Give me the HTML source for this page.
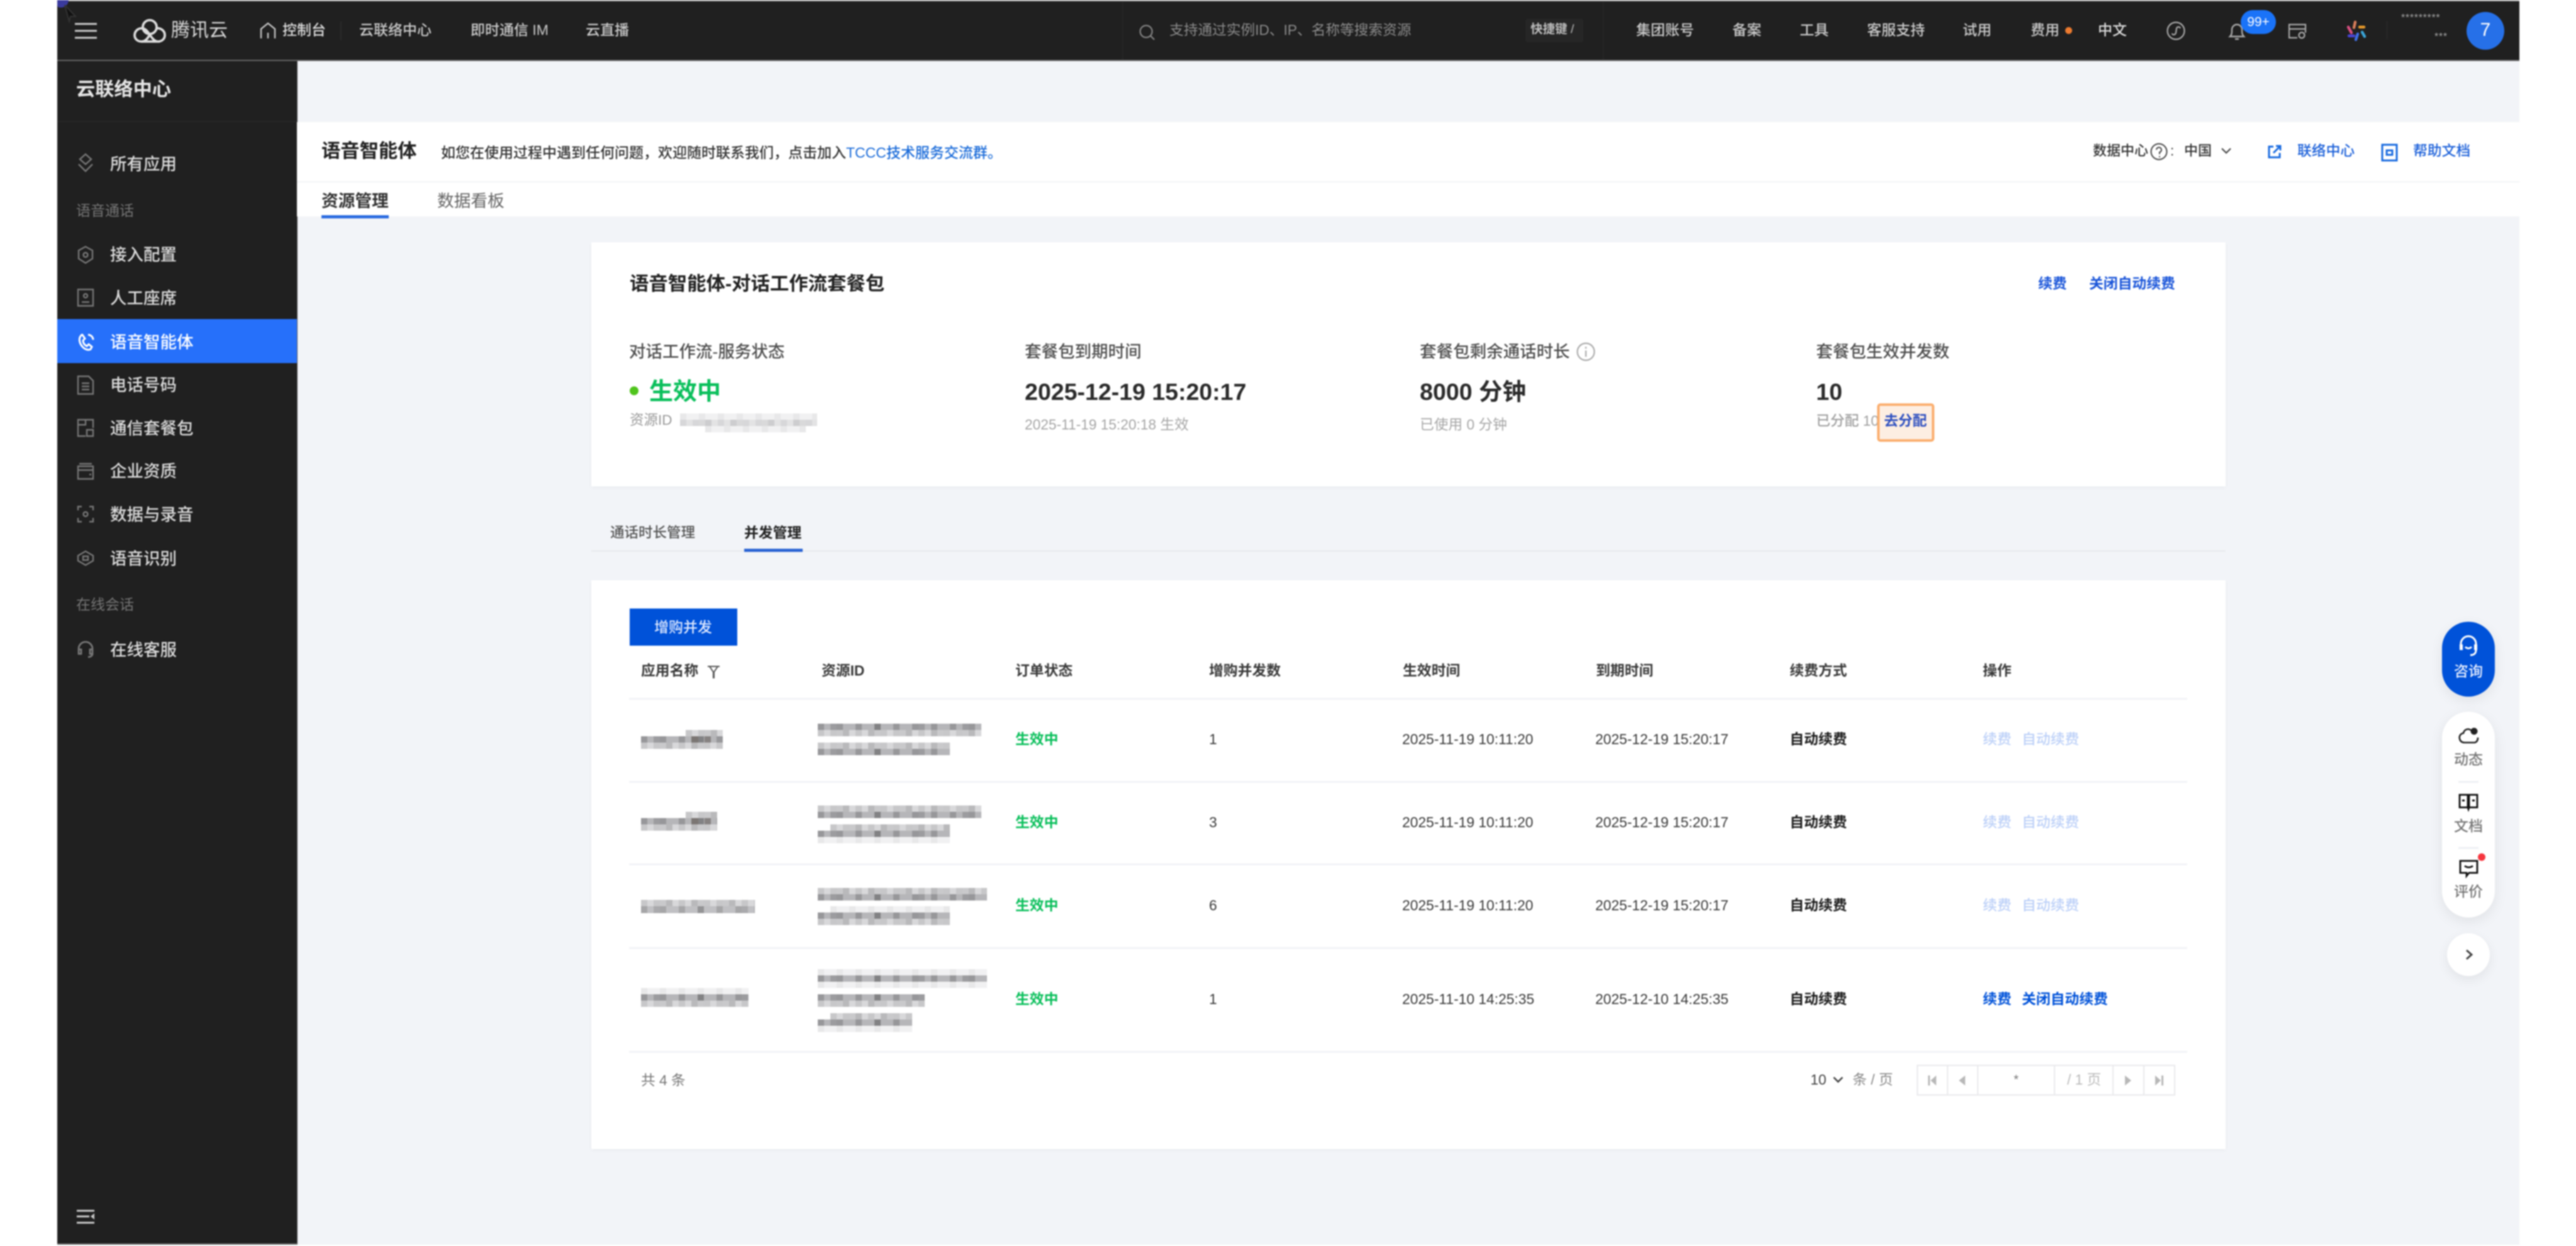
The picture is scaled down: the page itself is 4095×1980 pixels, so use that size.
<!DOCTYPE html>
<html lang="zh-CN"><head><meta charset="utf-8"><title>语音智能体</title>
<style>
html,body{margin:0;padding:0;width:4095px;height:1980px;background:#fff;overflow:hidden}
#r{position:absolute;left:0;top:0;width:4095px;height:1980px;overflow:hidden;filter:blur(1.15px);font-family:"Liberation Sans","Noto Sans CJK SC",sans-serif;color:#222}
.b{position:absolute}
.t{position:absolute;white-space:nowrap;line-height:1;transform:translateY(-50%);font-size:23px}
.w{font-weight:700}.n{font-weight:500}
svg{position:absolute;overflow:visible}
.h{color:#cacaca;font-weight:500}
.s{color:#dcdcdc;font-size:26.5px;font-weight:500;left:175px}
.g{color:#757575;font-size:23px;left:121px}
.lb{color:#4e4e4e;font-size:26.5px;font-weight:500}
.th{color:#3a3a3a;font-weight:700;font-size:22.8px;top:1066px}
.go{color:#0abf5b;font-weight:700;font-size:22.8px;left:1614px}
.dt{color:#3a3a3a;font-size:22.8px}
.au{color:#1c1c1c;font-weight:700;font-size:22.8px;left:2845px}
.op{color:#bcd0f8;font-size:22.8px;font-weight:500}
.a{color:#0052d9;font-weight:700;font-size:22.8px}
.m{position:absolute;height:10px}
.d{background:repeating-linear-gradient(90deg,#0000002b 0 10px,#0000 10px 30px),repeating-linear-gradient(90deg,#0000 0 20px,#00000024 20px 30px,#0000 30px 70px),#b6b6b9}
.l{background:repeating-linear-gradient(90deg,#00000014 0 10px,#0000 10px 20px),repeating-linear-gradient(90deg,#0000 0 30px,#00000012 30px 50px),#d8d8da}
.v{background:repeating-linear-gradient(90deg,#0000000a 0 10px,#0000 10px 30px),#f1f1f2}
.x{background:#7b7673}
.ln{position:absolute;left:1000px;width:2477px;height:3px;background:#f2f3f7}
.sd{position:absolute;top:1693px;width:2px;height:47px;background:#e9e9ec}
.fl{color:#777;font-size:23px;left:3924px;transform:translate(-50%,-50%);font-weight:500}
</style></head><body><div id="r">
<!-- page backdrop -->
<div class="b" style="left:91px;top:0;width:3914px;height:1978px;background:#f2f4f8"></div>
<!-- header -->
<div class="b" style="left:91px;top:0;width:3914px;height:97px;background:#202020;border-top:2px solid #b5b5b5;border-bottom:2px solid #666;box-sizing:border-box"></div>
<div class="b" style="left:91px;top:0;width:18px;height:12px;border-radius:0 0 12px 4px;background:#3a3a9e"></div>
<svg style="left:100px;top:6px" width="26" height="30"><path d="M3 2 L20 20 L12 20 L10 28 Z" fill="#111" stroke="#333" stroke-width="2"/></svg>
<svg style="left:119px;top:36px" width="36" height="26"><path d="M0 2H35M0 13H35M0 24H35" stroke="#c8c8c8" stroke-width="3"/></svg>
<svg style="left:212px;top:30px" width="52" height="38" viewBox="0 0 52 38" fill="none" stroke="#dcdcdc" stroke-width="3.8"><circle cx="26" cy="13" r="11"/><path d="M36 15c8-1 14 4 14 11 0 6-5 10-11 10H13C7 36 2 32 2 26s5-11 11-11c6 0 9 4 13 10s8 11 13 11"/><path d="M13 36c5 0 9-3 13-11"/></svg>
<div class="t" style="left:272px;top:49px;font-size:30px;color:#d8d8d8">腾讯云</div>
<svg style="left:412px;top:35px" width="28" height="26" fill="none" stroke="#c4c4c4" stroke-width="2.4"><path d="M3 26V11L14 2l11 9v15M14 26v-9"/></svg>
<div class="t n" style="left:449px;top:48px;color:#ddd">控制台</div>
<div class="t h" style="left:571px;top:48px">云联络中心</div>
<div class="t h" style="left:748px;top:48px">即时通信 IM</div>
<div class="t h" style="left:931px;top:48px">云直播</div>
<div class="b" style="left:541px;top:34px;width:2px;height:30px;background:#2b2b2b"></div>
<div class="b" style="left:1784px;top:3px;width:1px;height:92px;background:#2c2c2c"></div>
<div class="b" style="left:2548px;top:3px;width:1px;height:92px;background:#2c2c2c"></div>
<svg style="left:1810px;top:40px" width="28" height="24" fill="none" stroke="#858585" stroke-width="2.2"><circle cx="12" cy="10" r="9.5"/><path d="M19 17l6 6"/></svg>
<div class="t" style="left:1859px;top:48px;color:#8a8a8a;font-size:22.7px">支持通过实例ID、IP、名称等搜索资源</div>
<div class="b" style="left:2425px;top:30px;width:92px;height:37px;background:#262626;border-radius:3px"></div>
<div class="t w" style="left:2433px;top:47px;color:#bdbdbd;font-size:19.5px">快捷键 <span style="font-weight:400">/</span></div>
<div class="t h" style="left:2601px;top:48px">集团账号</div>
<div class="t h" style="left:2754px;top:48px">备案</div>
<div class="t h" style="left:2861px;top:48px">工具</div>
<div class="t h" style="left:2968px;top:48px">客服支持</div>
<div class="t h" style="left:3120px;top:48px">试用</div>
<div class="t h" style="left:3228px;top:48px">费用</div>
<div class="b" style="left:3283px;top:43px;width:11px;height:11px;border-radius:50%;background:#ed7b2f"></div>
<div class="t h" style="left:3335px;top:48px;color:#ddd">中文</div>
<svg style="left:3444px;top:34px" width="30" height="30" fill="none" stroke="#aaa" stroke-width="2.2"><circle cx="15" cy="15" r="13.5"/><path d="M9 19c0 3 5 3 6-1l1-7c1-3 5-3 6 0"/></svg>
<svg style="left:3543px;top:33px" width="26" height="32" fill="none" stroke="#aaa" stroke-width="2.4"><path d="M2 25c3-3 3-6 3-11a8 8 0 0 1 16 0c0 5 0 8 3 11zM10 29h6"/></svg>
<svg style="left:3637px;top:37px" width="30" height="26" fill="none" stroke="#aaa" stroke-width="2.2"><path d="M15 23H2V2h26v13M2 9h26"/><circle cx="22" cy="19" r="4.5"/></svg>
<svg style="left:3731px;top:32px" width="31" height="34" fill="none" stroke-width="4.4" stroke-linecap="round"><path d="M13 3l-2 9" stroke="#d87e5a"/><path d="M20 11h7" stroke="#e89a2a"/><path d="M24 19l4 7" stroke="#3aa5d8"/><path d="M17 22l-3 9" stroke="#3e6fe8"/><path d="M3 25h8" stroke="#4a45d8"/><path d="M2 11l5 9" stroke="#d84f80"/></svg>
<div class="b" style="left:3794px;top:33px;width:1px;height:30px;background:#2e2e2e"></div>
<div class="t" style="left:3817px;top:29px;color:#aaa;font-size:16px;letter-spacing:.7px">*********</div>
<div class="t" style="left:3870px;top:59px;color:#aaa;font-size:16px;letter-spacing:.7px">***</div>
<div class="b" style="left:3921px;top:19px;width:60px;height:60px;border-radius:50%;background:#2670e8"></div>
<div class="t" style="left:3951px;top:48px;color:#fff;font-size:30px;transform:translate(-50%,-50%)">7</div>
<div class="b" style="left:3562px;top:16px;width:56px;height:38px;border-radius:19px;background:#1a73f8"></div>
<div class="t n" style="left:3590px;top:35px;color:#fff;font-size:21px;transform:translate(-50%,-50%)">99+</div>
<!-- sidebar -->
<div class="b" style="left:91px;top:97px;width:381px;height:1881px;background:#202020;border-right:1px solid #555;box-sizing:content-box"></div>
<div class="b" style="left:91px;top:1976px;width:382px;height:2px;background:#777"></div>
<div class="t w" style="left:121px;top:143px;font-size:30.2px;color:#e6e6e6">云联络中心</div>
<div class="b" style="left:91px;top:192px;width:381px;height:2px;background:#282828"></div>
<svg style="left:122px;top:243px" width="28" height="32" fill="none" stroke="#777" stroke-width="2.4"><path d="M14 2l9 8-9 8-9-8zM3 18l11 11 11-11"/></svg>
<div class="t s" style="top:261px">所有应用</div>
<div class="t g" style="top:335px">语音通话</div>
<svg style="left:122px;top:390px" width="28" height="30" fill="none" stroke="#777" stroke-width="2.4"><path d="M14 2l11 6v13l-11 7-11-7V8z"/><circle cx="14" cy="15" r="3.5"/></svg>
<div class="t s" style="top:405px">接入配置</div>
<svg style="left:122px;top:458px" width="28" height="30" fill="none" stroke="#777" stroke-width="2.4"><path d="M2 2h24v26H2z"/><circle cx="14" cy="12" r="3"/><path d="M8 22h12"/></svg>
<div class="t s" style="top:474px">人工座席</div>
<div class="b" style="left:91px;top:507px;width:381px;height:70px;background:#2670fa"></div>
<svg style="left:122px;top:529px" width="28" height="30" fill="none" stroke="#fff" stroke-width="3"><path d="M8 3C2 8 4 17 10 23c3 3 8 5 12 3l2-4-5-4-3 3c-4-2-6-5-6-9l3-3-4-6zM18 3a8 8 0 0 1 8 8"/></svg>
<div class="t" style="left:175px;top:544px;color:#fff;font-size:26.5px;font-weight:500">语音智能体</div>
<svg style="left:122px;top:596px" width="28" height="32" fill="none" stroke="#777" stroke-width="2.4"><path d="M2 2h17l7 7v21H2zM8 13h12M8 18h12M8 23h12"/></svg>
<div class="t s" style="top:612px">电话号码</div>
<svg style="left:122px;top:665px" width="28" height="32" fill="none" stroke="#777" stroke-width="2.4"><path d="M14 28H2V2h24v13M2 10h12v-8"/><path d="M16 18h10v10H16z"/></svg>
<div class="t s" style="top:681px">通信套餐包</div>
<svg style="left:122px;top:735px" width="28" height="28" fill="none" stroke="#777" stroke-width="2.4"><path d="M2 6h24v20H2zM2 12h24M4 2h20M20 19h3"/></svg>
<div class="t s" style="top:749px">企业资质</div>
<svg style="left:122px;top:803px" width="28" height="28" fill="none" stroke="#777" stroke-width="2.4"><path d="M2 8V2h6M20 2h6v6M26 20v6h-6M8 26H2v-6"/><circle cx="14" cy="14" r="3.5"/></svg>
<div class="t s" style="top:818px">数据与录音</div>
<svg style="left:122px;top:873px" width="28" height="28" fill="none" stroke="#777" stroke-width="2.4"><path d="M2 10L14 3l12 7v8l-12 7-12-7z"/><path d="M10 11h8v6h-8z"/></svg>
<div class="t s" style="top:888px">语音识别</div>
<div class="t g" style="top:961px">在线会话</div>
<svg style="left:122px;top:1018px" width="28" height="28" fill="none" stroke="#777" stroke-width="2.8"><path d="M3 16v-3a11 11 0 0 1 22 0v3M3 14h4v7H3zM21 14h4v7h-4zM25 21c0 3-3 5-7 5"/></svg>
<div class="t s" style="top:1033px">在线客服</div>
<svg style="left:122px;top:1922px" width="28" height="24" fill="none" stroke="#c8c8c8" stroke-width="3"><path d="M0 2h28M0 11h20M0 21h28"/><path d="M28 6l-6 5 6 5z" fill="#c8c8c8" stroke="none"/></svg>
<!-- page head -->
<div class="b" style="left:472px;top:194px;width:3533px;height:150px;background:#fff"></div>
<div class="b" style="left:472px;top:288px;width:3533px;height:2px;background:#f3f4f7"></div>
<div class="t w" style="left:511px;top:241px;font-size:30.3px;color:#222">语音智能体</div>
<div class="t n" style="left:701px;top:243px;color:#333">如您在使用过程中遇到任何问题，欢迎随时联系我们，点击加入<span style="color:#1a6bd9">TCCC技术服务交流群。</span></div>
<div class="t w" style="left:511px;top:320px;font-size:26.7px;color:#333">资源管理</div>
<div class="b" style="left:511px;top:342px;width:107px;height:5px;background:#2a6be0"></div>
<div class="t" style="left:695px;top:320px;font-size:26.7px;color:#666">数据看板</div>
<div class="t n" style="left:3327px;top:240px;font-size:22px;color:#333">数据中心</div>
<svg style="left:3418px;top:227px" width="30" height="28" fill="none" stroke="#444" stroke-width="2"><circle cx="14" cy="14" r="12.5"/><path d="M10 11a4 4 0 1 1 5 4v3M15 21v2"/></svg>
<div class="t n" style="left:3450px;top:240px;font-size:22px;color:#333">:</div>
<div class="t n" style="left:3472px;top:240px;font-size:22px;color:#333">中国</div>
<svg style="left:3530px;top:234px" width="18" height="12" fill="none" stroke="#444" stroke-width="2.2"><path d="M2 2l7 7 7-7"/></svg>
<svg style="left:3605px;top:230px" width="21" height="22" fill="none" stroke="#1a6be0" stroke-width="3"><path d="M9 3H2v17h17v-7M9 13L19 3M13 2h7v7"/></svg>
<div class="t n" style="left:3652px;top:240px;font-size:22.8px;color:#1a5fd9">联络中心</div>
<svg style="left:3785px;top:228px" width="27" height="29" fill="none" stroke="#1a6be0" stroke-width="3"><path d="M2 2h23v25H2z"/><path d="M9 11h9v7H9z"/></svg>
<div class="t n" style="left:3836px;top:240px;font-size:22.8px;color:#1a5fd9">帮助文档</div>
<!-- card 1 -->
<div class="b" style="left:940px;top:385px;width:2598px;height:388px;background:#fff;box-shadow:0 2px 6px #0000000a"></div>
<div class="t w" style="left:1001px;top:451px;font-size:30.4px;color:#222">语音智能体-对话工作流套餐包</div>
<div class="t a" style="left:3240px;top:451px;color:#1a55d9">续费</div>
<div class="t a" style="left:3321px;top:451px;color:#1a55d9">关闭自动续费</div>
<div class="t lb" style="left:1000px;top:559px">对话工作流-服务状态</div>
<div class="t lb" style="left:1629px;top:559px">套餐包到期时间</div>
<div class="t lb" style="left:2257px;top:559px">套餐包剩余通话时长</div>
<svg style="left:2506px;top:544px" width="30" height="30" fill="none" stroke="#aaa" stroke-width="2.2"><circle cx="15" cy="15" r="13.5"/><path d="M15 13v10M15 7v3"/></svg>
<div class="t lb" style="left:2887px;top:559px">套餐包生效并发数</div>
<div class="b" style="left:1001px;top:614px;width:14px;height:14px;border-radius:50%;background:#4fc41c"></div>
<div class="t w" style="left:1032px;top:623px;font-size:38px;color:#0abf5b">生效中</div>
<div class="t w" style="left:1629px;top:623px;font-size:37.5px;color:#2b2b2b">2025-12-19 15:20:17</div>
<div class="t w" style="left:2257px;top:623px;font-size:37.5px;color:#2b2b2b">8000 分钟</div>
<div class="t w" style="left:2887px;top:623px;font-size:37.5px;color:#2b2b2b">10</div>
<div class="t" style="left:1001px;top:668px;font-size:22.5px;color:#999">资源ID</div>
<i class="m v" style="left:1081px;top:657px;width:218px"></i><i class="m l" style="left:1081px;top:667px;width:218px;opacity:.7"></i><i class="m v" style="left:1121px;top:677px;width:160px"></i>
<div class="t" style="left:1629px;top:675px;font-size:22.7px;color:#a6a6a6">2025-11-19 15:20:18 生效</div>
<div class="t" style="left:2257px;top:675px;font-size:22.7px;color:#a6a6a6">已使用 0 分钟</div>
<div class="t n" style="left:2887px;top:669px;font-size:22.7px;color:#a0a0a0">已分配 10</div>
<div class="b" style="left:2984px;top:641px;width:91px;height:61px;box-sizing:border-box;background:#fdeee2;border:4px solid #fbae6e;border-radius:5px"></div>
<div class="t w" style="left:2995px;top:669px;font-size:22.7px;color:#2f50c0">去分配</div>
<!-- tabs -->
<div class="t n" style="left:970px;top:847px;font-size:22.5px;color:#555">通话时长管理</div>
<div class="t w" style="left:1183px;top:847px;font-size:22.8px;color:#222">并发管理</div>
<div class="b" style="left:940px;top:874px;width:2598px;height:3px;background:#eaecef"></div>
<div class="b" style="left:1183px;top:872px;width:93px;height:5px;background:#2a63d4"></div>
<!-- card 2 -->
<div class="b" style="left:940px;top:922px;width:2598px;height:904px;background:#fff;box-shadow:0 2px 6px #0000000a"></div>
<div class="b" style="left:1001px;top:967px;width:171px;height:59px;background:#0052d9"></div>
<div class="t n" style="left:1040px;top:997px;color:#dfe9ff;font-size:23px">增购并发</div>
<div class="t th" style="left:1019px">应用名称</div>
<svg style="left:1124px;top:1057px" width="21" height="22" fill="none" stroke="#555" stroke-width="2"><path d="M1 2h19M4 2l6 9v10M17 2l-6 9v10"/></svg>
<div class="t th" style="left:1306px">资源ID</div>
<div class="t th" style="left:1614px">订单状态</div>
<div class="t th" style="left:1922px">增购并发数</div>
<div class="t th" style="left:2230px">生效时间</div>
<div class="t th" style="left:2537px">到期时间</div>
<div class="t th" style="left:2845px">续费方式</div>
<div class="t th" style="left:3152px">操作</div>
<div class="ln" style="top:1109px"></div><div class="ln" style="top:1241px"></div><div class="ln" style="top:1372px"></div><div class="ln" style="top:1505px"></div><div class="ln" style="top:1670px"></div>
<!-- mosaics row 1 -->
<i class="m l" style="left:1090px;top:1160px;width:59px"></i><i class="m d" style="left:1019px;top:1170px;width:130px"></i><i class="m l" style="left:1019px;top:1180px;width:130px"></i>
<i class="m x" style="left:1099px;top:1170px;width:11px"></i><i class="m x" style="left:1120px;top:1170px;width:10px;opacity:.8"></i>
<i class="m d" style="left:1300px;top:1150px;width:260px"></i><i class="m l" style="left:1300px;top:1160px;width:260px"></i>
<i class="m l" style="left:1300px;top:1180px;width:210px"></i><i class="m d" style="left:1300px;top:1190px;width:210px"></i>
<!-- row 2 -->
<i class="m l" style="left:1090px;top:1290px;width:50px"></i><i class="m d" style="left:1019px;top:1300px;width:121px"></i><i class="m l" style="left:1019px;top:1310px;width:121px"></i>
<i class="m x" style="left:1099px;top:1300px;width:11px"></i><i class="m x" style="left:1120px;top:1300px;width:10px;opacity:.8"></i>
<i class="m l" style="left:1300px;top:1280px;width:260px"></i><i class="m d" style="left:1300px;top:1290px;width:260px"></i>
<i class="m l" style="left:1320px;top:1310px;width:190px"></i><i class="m d" style="left:1300px;top:1320px;width:210px"></i><i class="m v" style="left:1300px;top:1330px;width:210px"></i>
<!-- row 3 -->
<i class="m l" style="left:1019px;top:1430px;width:181px"></i><i class="m d" style="left:1019px;top:1440px;width:181px;height:11px;opacity:.85"></i>
<i class="m l" style="left:1300px;top:1411px;width:269px"></i><i class="m d" style="left:1300px;top:1421px;width:269px"></i>
<i class="m v" style="left:1320px;top:1440px;width:190px"></i><i class="m d" style="left:1300px;top:1450px;width:210px"></i><i class="m l" style="left:1300px;top:1460px;width:210px"></i>
<!-- row 4 -->
<i class="m v" style="left:1019px;top:1570px;width:171px"></i><i class="m d" style="left:1019px;top:1580px;width:171px"></i><i class="m l" style="left:1019px;top:1590px;width:171px"></i>
<i class="m v" style="left:1300px;top:1540px;width:269px"></i><i class="m d" style="left:1300px;top:1550px;width:269px"></i><i class="m v" style="left:1300px;top:1560px;width:269px"></i>
<i class="m d" style="left:1300px;top:1580px;width:170px"></i><i class="m l" style="left:1300px;top:1590px;width:170px"></i>
<i class="m l" style="left:1320px;top:1610px;width:130px"></i><i class="m d" style="left:1300px;top:1620px;width:150px"></i><i class="m v" style="left:1300px;top:1630px;width:150px"></i>
<!-- table text -->
<div class="t go" style="top:1175px">生效中</div><div class="t dt" style="left:1922px;top:1175px">1</div><div class="t dt" style="left:2229px;top:1175px">2025-11-19 10:11:20</div><div class="t dt" style="left:2536px;top:1175px">2025-12-19 15:20:17</div><div class="t au" style="top:1175px">自动续费</div><div class="t op" style="left:3152px;top:1175px">续费</div><div class="t op" style="left:3214px;top:1175px">自动续费</div>
<div class="t go" style="top:1307px">生效中</div><div class="t dt" style="left:1922px;top:1307px">3</div><div class="t dt" style="left:2229px;top:1307px">2025-11-19 10:11:20</div><div class="t dt" style="left:2536px;top:1307px">2025-12-19 15:20:17</div><div class="t au" style="top:1307px">自动续费</div><div class="t op" style="left:3152px;top:1307px">续费</div><div class="t op" style="left:3214px;top:1307px">自动续费</div>
<div class="t go" style="top:1439px">生效中</div><div class="t dt" style="left:1922px;top:1439px">6</div><div class="t dt" style="left:2229px;top:1439px">2025-11-19 10:11:20</div><div class="t dt" style="left:2536px;top:1439px">2025-12-19 15:20:17</div><div class="t au" style="top:1439px">自动续费</div><div class="t op" style="left:3152px;top:1439px">续费</div><div class="t op" style="left:3214px;top:1439px">自动续费</div>
<div class="t go" style="top:1588px">生效中</div><div class="t dt" style="left:1922px;top:1588px">1</div><div class="t dt" style="left:2229px;top:1588px">2025-11-10 14:25:35</div><div class="t dt" style="left:2536px;top:1588px">2025-12-10 14:25:35</div><div class="t au" style="top:1588px">自动续费</div><div class="t a" style="left:3152px;top:1588px">续费</div><div class="t a" style="left:3214px;top:1588px">关闭自动续费</div>
<!-- pagination -->
<div class="t" style="left:1019px;top:1717px;color:#777;font-size:22.7px">共 4 条</div>
<div class="t" style="left:2878px;top:1716px;color:#444;font-size:22.7px">10</div>
<svg style="left:2913px;top:1710px" width="18" height="12" fill="none" stroke="#444" stroke-width="2.6"><path d="M2 2l7 7 7-7"/></svg>
<div class="t" style="left:2945px;top:1716px;color:#888;font-size:22.7px">条 / 页</div>
<div class="b" style="left:3047px;top:1692px;width:411px;height:49px;box-sizing:border-box;border:2px solid #e9e9ec"></div>
<div class="sd" style="left:3095px"></div><div class="sd" style="left:3143px"></div><div class="sd" style="left:3265px"></div><div class="sd" style="left:3358px"></div><div class="sd" style="left:3407px"></div>
<svg style="left:3064px;top:1706px" width="16" height="22" fill="#b8b8b8"><path d="M1 3h3v16H1zM14 3v16L5 11z"/></svg>
<svg style="left:3112px;top:1706px" width="14" height="22" fill="#b8b8b8"><path d="M12 3v16L2 11z"/></svg>
<div class="t" style="left:3205px;top:1716px;color:#777;font-size:20px;transform:translate(-50%,-50%)">*</div>
<div class="t" style="left:3286px;top:1716px;color:#bbb;font-size:22.7px">/ 1 页</div>
<svg style="left:3376px;top:1706px" width="14" height="22" fill="#b8b8b8"><path d="M2 3v16l10-8z"/></svg>
<svg style="left:3424px;top:1706px" width="16" height="22" fill="#b8b8b8"><path d="M2 3v16l9-8zM12 3h3v16h-3z"/></svg>
<!-- float tools -->
<div class="b" style="left:3882px;top:988px;width:84px;height:119px;border-radius:42px;background:#0052d9;box-shadow:0 6px 20px #00000014"></div>
<svg style="left:3908px;top:1009px" width="32" height="36" fill="none" stroke="#fff" stroke-width="3"><path d="M4 16V14a12 12 0 0 1 24 0v2"/><path d="M2 15h5v9H2zM25 15h5v9h-5z" fill="#fff" stroke="none"/><path d="M11 19c3 3 7 3 10 0M28 24c0 5-3 8-9 8" /></svg>
<div class="t fl" style="top:1067px;color:#e8efff">咨询</div>
<div class="b" style="left:3882px;top:1131px;width:84px;height:327px;border-radius:42px;background:#fff;box-shadow:0 6px 22px #00000014"></div>
<svg style="left:3908px;top:1155px" width="32" height="28" fill="none" stroke="#222" stroke-width="2.6"><path d="M22 8c-3-6-12-6-14 2-5 1-7 5-6 9 1 4 4 6 8 6h16c4-1 5-4 5-8"/><circle cx="25" cy="7" r="5.5" fill="#222" stroke="none"/></svg>
<div class="t fl" style="top:1207px">动态</div>
<div class="b" style="left:3908px;top:1241px;width:32px;height:3px;background:#eef0f4"></div>
<svg style="left:3908px;top:1261px" width="32" height="26" fill="none" stroke="#111" stroke-width="2.8"><path d="M2 2h13v20H2zM17 2h13v20H17zM15 22l1 3 1-3"/><path d="M6 11h4M22 11h4" stroke-width="3"/></svg>
<div class="t fl" style="top:1313px">文档</div>
<div class="b" style="left:3908px;top:1346px;width:32px;height:3px;background:#eef0f4"></div>
<svg style="left:3909px;top:1366px" width="30" height="28" fill="none" stroke="#111" stroke-width="2.8"><path d="M2 2h27v19H16l-4 5v-5H2z"/><path d="M9 10c4 3 9 3 13 0"/></svg>
<div class="b" style="left:3939px;top:1356px;width:12px;height:12px;border-radius:50%;background:#f6363f"></div>
<div class="t fl" style="top:1417px">评价</div>
<div class="b" style="left:3890px;top:1483px;width:68px;height:68px;border-radius:50%;background:#fff;box-shadow:0 6px 18px #00000012"></div>
<svg style="left:3919px;top:1508px" width="12" height="18" fill="none" stroke="#444" stroke-width="3"><path d="M2 2l8 7-8 7"/></svg>
</div></body></html>
